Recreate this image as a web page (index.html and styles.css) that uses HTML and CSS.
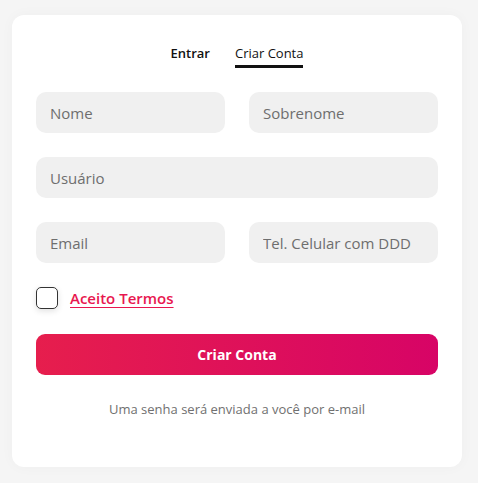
FILE: index.html
```html
<!DOCTYPE html>
<html lang="pt-BR">
<head>
    <meta charset="UTF-8">
    <meta name="viewport" content="width=device-width, initial-scale=1.0">
    <title>Criar Conta</title>

    <!-- estilo -->
    <link rel="stylesheet" href="styles.css">
</head>
<body>
    <div id="formCard">
        <div class="tabs">
            <span class="tab">Entrar</span>
            <span class="tab active">Criar Conta</span>
        </div>

        <form class="signupForm">
            <div class="row">
                <input type="text" placeholder="Nome">
                <input type="text" placeholder="Sobrenome">
            </div>

            <div class="row">
                <input type="text" placeholder="Usuário">
            </div>

            <div class="row">
                <input type="email" placeholder="Email">
                <input type="tel" placeholder="Tel. Celular com DDD">
            </div>

            <label class="terms">
                <span class="checkBox"></span>
                <a href="#">Aceito Termos</a>
            </label>

            <button type="button" class="submitBtn">Criar Conta</button>

            <p class="note">Uma senha será enviada a você por e-mail</p>
        </form>
    </div>
</body>
</html>
```

FILE: styles.css
```css
body {
    font-family: "Open Sans", Arial, sans-serif;
    margin: 0;
    padding: 15px 16px 16px 12px;
    background-color: #f5f5f5;
}

#formCard {
    width: 450px;
    height: 452px;
    box-sizing: border-box;
    background-color: white;
    border-radius: 12px;
    padding: 30px 24px 0 24px;
    box-shadow: 0 0 14px rgba(0, 0, 0, 0.03);
}

.tabs {
    display: flex;
    justify-content: center;
    gap: 25px;
    margin-bottom: 24px;
}

.tab {
    font-size: 13px;
    font-weight: 600;
    color: #111;
    padding-bottom: 3px;
    border-bottom: 3px solid transparent;
    line-height: 17px;
}

.tab.active {
    font-weight: 500;
    border-bottom-color: #111;
}

.signupForm {
    display: flex;
    flex-direction: column;
}

.row {
    display: flex;
    gap: 24px;
    margin-bottom: 24px;
}

input {
    flex: 1;
    min-width: 0;
    height: 41px;
    box-sizing: border-box;
    padding: 0 14px;
    border: none;
    border-radius: 10px;
    background-color: #f0f0f0;
    font-family: inherit;
    font-size: 15px;
    outline: none;
}

input::placeholder {
    color: #6e6e6e;
}

.terms {
    display: flex;
    align-items: center;
    gap: 12px;
    margin-bottom: 25px;
}

.checkBox {
    width: 20px;
    height: 20px;
    border: 1px solid #333;
    border-radius: 5px;
    box-shadow: 0 2px 6px rgba(0, 0, 0, 0.12);
}

.terms a {
    color: #e8174f;
    font-size: 15px;
    font-weight: 600;
    text-decoration: underline;
    text-underline-offset: 3px;
}

.submitBtn {
    height: 41px;
    border: none;
    border-radius: 9px;
    background: linear-gradient(90deg, #e61e4d, #d70466);
    color: white;
    font-family: inherit;
    font-size: 14px;
    font-weight: 700;
    cursor: pointer;
}

.note {
    text-align: center;
    font-size: 13px;
    color: #707070;
    margin: 25px 0 0 0;
}
```
